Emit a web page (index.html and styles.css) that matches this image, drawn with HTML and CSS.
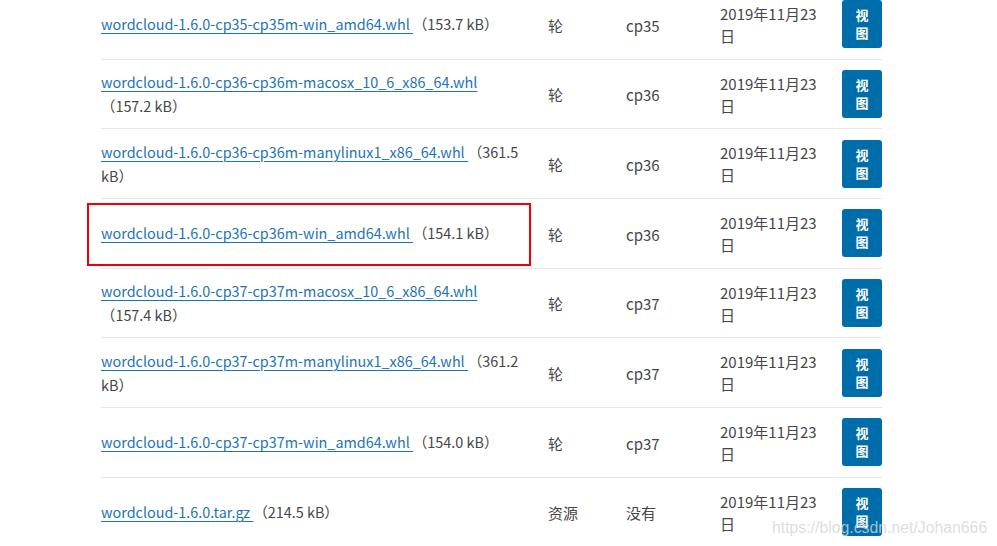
FILE: index.html
```html
<!DOCTYPE html>
<html lang="zh-CN">
<head>
<meta charset="utf-8">
<title>wordcloud 1.6.0 下载文件</title>
<link rel="stylesheet" href="styles.css">
</head>
<body>
<div class="page">
  <table class="files">
    <tbody>
      <tr>
        <td class="c-name"><a href="#">wordcloud-1.6.0-cp35-cp35m-win_amd64.whl </a> （153.7 kB）</td>
        <td class="c-type">轮</td>
        <td class="c-py">cp35</td>
        <td class="c-date">2019年11月23日</td>
        <td class="c-btn"><a class="btn" href="#">视图</a></td>
      </tr>
      <tr>
        <td class="c-name"><a href="#">wordcloud-1.6.0-cp36-cp36m-macosx_10_6_x86_64.whl</a> （157.2 kB）</td>
        <td class="c-type">轮</td>
        <td class="c-py">cp36</td>
        <td class="c-date">2019年11月23日</td>
        <td class="c-btn"><a class="btn" href="#">视图</a></td>
      </tr>
      <tr>
        <td class="c-name"><a href="#">wordcloud-1.6.0-cp36-cp36m-manylinux1_x86_64.whl </a> （361.5 kB）</td>
        <td class="c-type">轮</td>
        <td class="c-py">cp36</td>
        <td class="c-date">2019年11月23日</td>
        <td class="c-btn"><a class="btn" href="#">视图</a></td>
      </tr>
      <tr class="marked">
        <td class="c-name"><span class="mark"></span><a href="#">wordcloud-1.6.0-cp36-cp36m-win_amd64.whl </a> （154.1 kB）</td>
        <td class="c-type">轮</td>
        <td class="c-py">cp36</td>
        <td class="c-date">2019年11月23日</td>
        <td class="c-btn"><a class="btn" href="#">视图</a></td>
      </tr>
      <tr>
        <td class="c-name"><a href="#">wordcloud-1.6.0-cp37-cp37m-macosx_10_6_x86_64.whl</a> （157.4 kB）</td>
        <td class="c-type">轮</td>
        <td class="c-py">cp37</td>
        <td class="c-date">2019年11月23日</td>
        <td class="c-btn"><a class="btn" href="#">视图</a></td>
      </tr>
      <tr>
        <td class="c-name"><a href="#">wordcloud-1.6.0-cp37-cp37m-manylinux1_x86_64.whl </a> （361.2 kB）</td>
        <td class="c-type">轮</td>
        <td class="c-py">cp37</td>
        <td class="c-date">2019年11月23日</td>
        <td class="c-btn"><a class="btn" href="#">视图</a></td>
      </tr>
      <tr>
        <td class="c-name"><a href="#">wordcloud-1.6.0-cp37-cp37m-win_amd64.whl </a> （154.0 kB）</td>
        <td class="c-type">轮</td>
        <td class="c-py">cp37</td>
        <td class="c-date">2019年11月23日</td>
        <td class="c-btn"><a class="btn" href="#">视图</a></td>
      </tr>
      <tr class="last">
        <td class="c-name"><a href="#">wordcloud-1.6.0.tar.gz </a> （214.5 kB）</td>
        <td class="c-type">资源</td>
        <td class="c-py">没有</td>
        <td class="c-date">2019年11月23日</td>
        <td class="c-btn"><a class="btn" href="#">视图</a></td>
      </tr>
    </tbody>
  </table>
  <div class="watermark">https://blog.csdn.net/Johan666</div>
</div>
</body>
</html>
```

FILE: styles.css
```css
html, body {
  margin: 0;
  padding: 0;
  background: #ffffff;
  overflow: hidden;
}

.page {
  position: relative;
  width: 997px;
  height: 546px;
  overflow: hidden;
  font-family: "Noto Sans CJK SC", "Noto Sans", sans-serif;
  font-size: 15px;
  color: #464646;
}

.files {
  margin: -10px 0 0 101px;
  border-collapse: collapse;
  table-layout: fixed;
  width: 781px;
}

.files td {
  padding: 10.33px 0;
  vertical-align: middle;
  line-height: 22px;
  border-bottom: 1px solid #e8e8e8;
}

.files tr.last td {
  border-bottom: none;
}

.c-name {
  width: 447px;
  padding-right: 23px !important;
  box-sizing: border-box;
  position: relative;
  font-size: 14.4px;
  line-height: 24px !important;
}

.c-name a {
  color: #1d74b3;
  text-decoration: underline;
  text-underline-offset: 3px;
  text-decoration-thickness: 1px;
}

.c-type { width: 78px; padding-top: 13px !important; }
.c-py { width: 94px; padding-top: 13px !important; }

.c-date {
  width: 122px;
  padding-right: 24px !important;
  padding-top: 12px !important;
  box-sizing: border-box;
}

.c-btn { width: 40px; }

.btn {
  display: block;
  box-sizing: border-box;
  width: 40px;
  height: 48px;
  padding: 6px 12px;
  border-radius: 3px;
  background: #006dab;
  color: #ffffff;
  font-weight: bold;
  font-size: 13px;
  line-height: 18px;
  text-align: center;
  text-decoration: none;
}

.mark {
  position: absolute;
  left: -14px;
  top: 4px;
  width: 440px;
  height: 59px;
  border: 2px solid #f00000;
  pointer-events: none;
}

.watermark {
  position: absolute;
  left: 772px;
  top: 519px;
  font-family: "Liberation Sans", Arial, sans-serif;
  font-size: 15.8px;
  color: rgba(210, 213, 217, 0.8);
  white-space: nowrap;
}
```
